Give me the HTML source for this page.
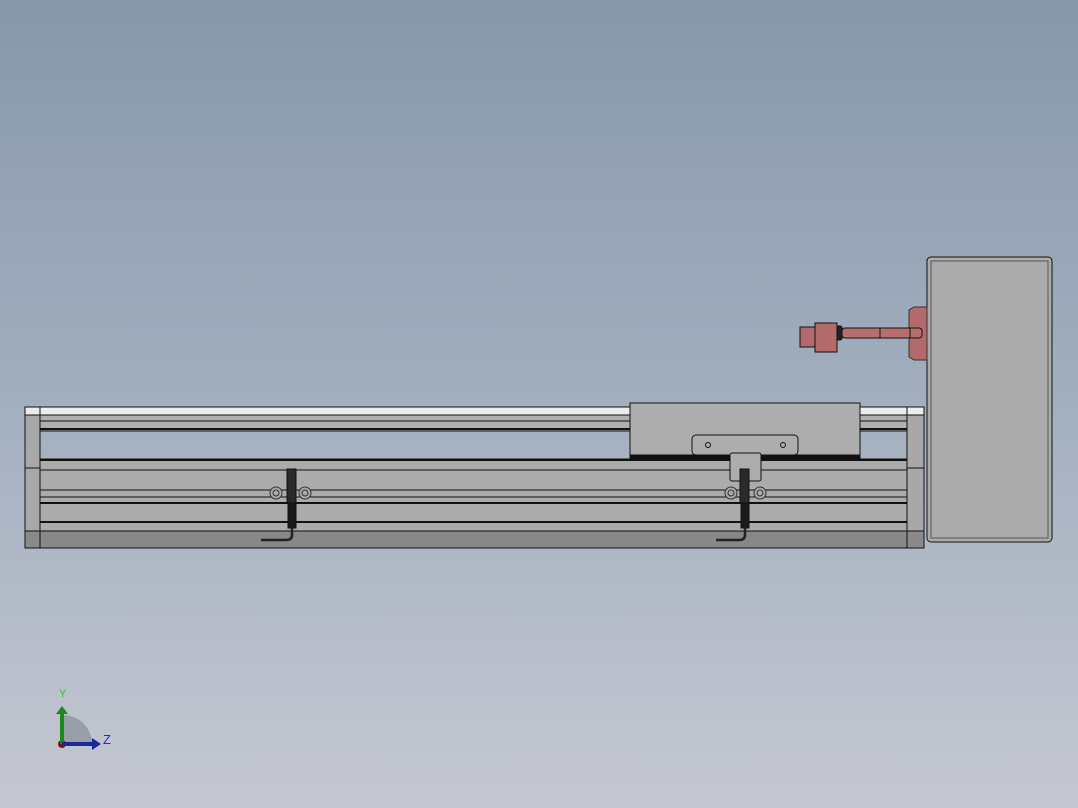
<!DOCTYPE html>
<html><head><style>
html,body{margin:0;padding:0;width:1078px;height:808px;overflow:hidden}
body{background:linear-gradient(#8797ab 0%,#a3afbf 50%,#c5c8d2 100%)}
svg{position:absolute;left:0;top:0}
</style></head><body>
<svg width="1078" height="808" viewBox="0 0 1078 808" font-family="Liberation Sans, sans-serif">
<g stroke="#111" stroke-width="1">
<!-- top rail -->
<rect x="40" y="407" width="868" height="8" fill="#ececec"/>
<rect x="40" y="415" width="868" height="16" fill="#b0b0b0"/>
<line x1="40" y1="421" x2="908" y2="421"/>
<line x1="40" y1="429" x2="908" y2="429" stroke-width="2"/>
<!-- lower body -->
<rect x="40" y="459" width="868" height="89" fill="#ababab"/>
<line x1="40" y1="460" x2="908" y2="460" stroke-width="2"/>
<line x1="40" y1="470" x2="908" y2="470"/>
<line x1="40" y1="490" x2="908" y2="490"/>
<line x1="40" y1="497" x2="908" y2="497"/>
<line x1="40" y1="503" x2="908" y2="503" stroke-width="2"/>
<line x1="40" y1="522" x2="908" y2="522" stroke-width="2"/>
<rect x="40" y="531" width="868" height="17" fill="#888"/>
<!-- end caps -->
<rect x="25" y="407" width="15" height="141" fill="#a8a8a8"/>
<rect x="25" y="407" width="15" height="8" fill="#ececec"/>
<line x1="25" y1="468" x2="40" y2="468"/>
<rect x="25" y="531" width="15" height="17" fill="#8a8a8a"/>
<rect x="907" y="407" width="17" height="141" fill="#a8a8a8"/>
<rect x="907" y="407" width="17" height="8" fill="#ececec"/>
<line x1="907" y1="468" x2="924" y2="468"/>
<rect x="907" y="531" width="17" height="17" fill="#8a8a8a"/>
<!-- carriage -->
<rect x="630" y="403" width="230" height="55" fill="#adadad"/>
<line x1="630" y1="456" x2="860" y2="456" stroke-width="3"/>
<rect x="692" y="435" width="106" height="20" rx="4" fill="#adadad"/>
<circle cx="708" cy="445" r="2.5" fill="none"/>
<circle cx="783" cy="445" r="2.5" fill="none"/>
<rect x="730" y="453" width="31" height="28" rx="2" fill="#adadad"/>
<!-- motor box -->
<rect x="927" y="257" width="125" height="285" rx="4" fill="#ababab"/>
<rect x="931" y="261" width="117" height="277" fill="none" stroke="#555"/>
<!-- red parts -->
<path d="M914 307 H927 V360 H914 L909 357 V310 Z" fill="#b36a6a" stroke="#333"/>
<rect x="842" y="328" width="80" height="10" rx="3" fill="#b96e6e"/>
<line x1="880" y1="328" x2="880" y2="338"/>
<line x1="910" y1="328" x2="910" y2="338"/>
<rect x="836" y="326" width="6" height="14" rx="2" fill="#222"/>
<rect x="815" y="323" width="22" height="29" fill="#b36a6a"/>
<rect x="800" y="327" width="15" height="20" fill="#b36a6a"/>
<!-- sensors -->
<g fill="#aaa" stroke="#333">
<circle cx="276" cy="493" r="6"/><circle cx="276" cy="493" r="3"/>
<circle cx="305" cy="493" r="6"/><circle cx="305" cy="493" r="3"/>
<circle cx="731" cy="493" r="6"/><circle cx="731" cy="493" r="3"/>
<circle cx="760" cy="493" r="6"/><circle cx="760" cy="493" r="3"/>
</g>
<rect x="287" y="469" width="9" height="34" fill="#2a2a2a"/>
<rect x="288" y="503" width="8" height="25" fill="#1a1a1a"/>
<path d="M292 528 V535 Q292 540 286 540 H261" fill="none" stroke="#222" stroke-width="2.5"/>
<rect x="740" y="469" width="9" height="34" fill="#2a2a2a"/>
<rect x="741" y="503" width="8" height="25" fill="#1a1a1a"/>
<path d="M745 528 V535 Q745 540 739 540 H716" fill="none" stroke="#222" stroke-width="2.5"/>
</g>
<!-- triad -->
<path d="M63 744 V715 A29 29 0 0 1 92 744 Z" fill="#9a9ea6"/>
<circle cx="62" cy="744" r="4" fill="#8a1010"/>
<line x1="62" y1="744" x2="62" y2="714" stroke="#1a8a1a" stroke-width="4"/>
<path d="M56 714 L62 706 L68 714 Z" fill="#1a8a1a"/>
<line x1="62" y1="744" x2="93" y2="744" stroke="#1a2a9a" stroke-width="4"/>
<path d="M92 738 L101 744 L92 750 Z" fill="#1a2a9a"/>
<text x="59" y="697" font-size="11" fill="#2c2">Y</text>
<text x="103" y="744" font-size="13" fill="#22f">Z</text>
</svg>
</body></html>
